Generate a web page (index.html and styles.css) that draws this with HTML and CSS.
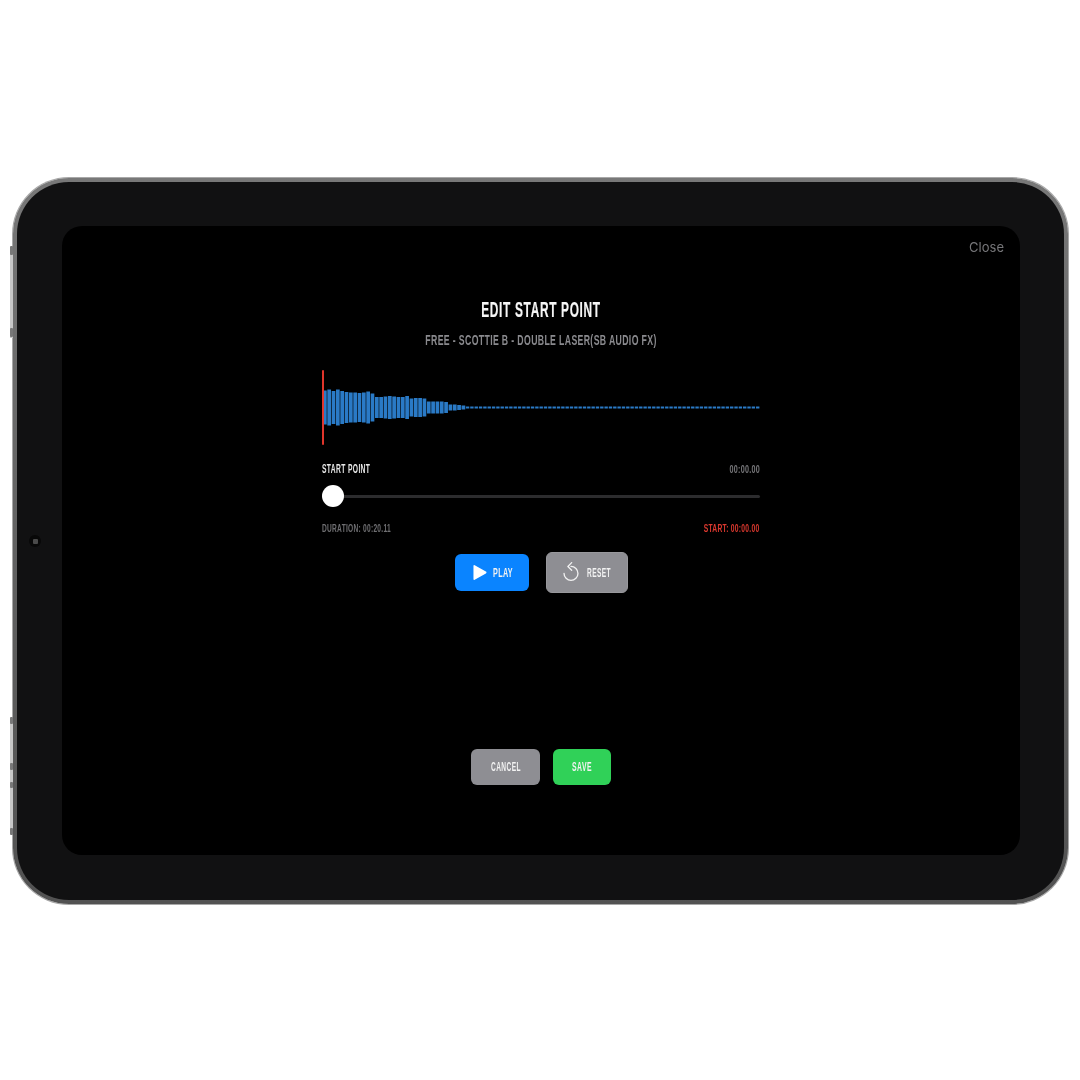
FILE: index.html
```html
<!DOCTYPE html>
<html lang="en">
<head>
<meta charset="utf-8">
<title>Edit Start Point</title>
<link rel="stylesheet" href="styles.css">
</head>
<body>
<div class="stage">
  <div class="device">
    <span class="rail rail-top"></span>
    <span class="rail rail-bottom"></span>
    <span class="key key-1"></span>
    <span class="key key-2"></span>
    <span class="key key-3"></span>
    <span class="key key-4"></span>
    <span class="key key-5"></span>
    <span class="key key-6"></span>
    <span class="camera"><i></i></span>
    <main class="screen">
      <span class="close">Close</span>
      <section class="panel">
        <h1 class="title">EDIT START POINT</h1>
        <p class="subtitle">FREE - SCOTTIE B - DOUBLE LASER(SB AUDIO FX)</p>
        <div class="wave">
          <svg class="wave-svg" viewBox="0 0 438 75" width="438" height="75">
            <g class="wave-bars">
              <rect x="1" y="20.5" width="3.7" height="34"/><rect x="5.33" y="19.5" width="3.7" height="36"/><rect x="9.66" y="21" width="3.7" height="33"/><rect x="13.99" y="19.5" width="3.7" height="36"/><rect x="18.32" y="21" width="3.7" height="33"/><rect x="22.65" y="22" width="3.7" height="31"/><rect x="26.98" y="22.5" width="3.7" height="30"/><rect x="31.31" y="22.5" width="3.7" height="30"/><rect x="35.64" y="23" width="3.7" height="29"/><rect x="39.97" y="22.5" width="3.7" height="30"/><rect x="44.3" y="21.5" width="3.7" height="32"/><rect x="48.63" y="23.5" width="3.7" height="28"/>
              <rect x="52.96" y="27" width="3.7" height="21"/><rect x="57.29" y="27" width="3.7" height="21"/><rect x="61.62" y="26.5" width="3.7" height="22"/><rect x="65.95" y="26" width="3.7" height="23"/><rect x="70.28" y="26.5" width="3.7" height="22"/><rect x="74.61" y="27" width="3.7" height="21"/><rect x="78.94" y="27" width="3.7" height="21"/><rect x="83.27" y="26" width="3.7" height="23"/>
              <rect x="87.6" y="28.5" width="3.7" height="18"/><rect x="91.93" y="28" width="3.7" height="19"/><rect x="96.26" y="28" width="3.7" height="19"/><rect x="100.59" y="28.5" width="3.7" height="18"/><rect x="104.92" y="31.5" width="3.7" height="12"/><rect x="109.25" y="31.5" width="3.7" height="12"/><rect x="113.58" y="31.5" width="3.7" height="12"/><rect x="117.91" y="31.5" width="3.7" height="12"/><rect x="122.24" y="32" width="3.7" height="11"/>
              <rect x="126.57" y="34.5" width="3.7" height="6"/><rect x="130.9" y="34.5" width="3.7" height="6"/><rect x="135.23" y="35" width="3.7" height="5"/><rect x="139.56" y="35.5" width="3.7" height="4"/>
            </g>
            <line class="wave-tail" x1="143.89" y1="37.5" x2="438" y2="37.5"/>
            <rect class="wave-marker" x="0" y="0" width="2" height="75" rx="1"/>
          </svg>
        </div>
        <div class="row row-head">
          <span class="label">START POINT</span>
          <span class="time">00:00.00</span>
        </div>
        <div class="slider"><span class="thumb"></span></div>
        <div class="row row-info">
          <span class="duration">DURATION: 00:20.11</span>
          <span class="start">START: 00:00.00</span>
        </div>
        <div class="controls">
          <button class="btn btn-play">
            <svg class="icon-play" viewBox="0 0 15 18" width="14" height="17"><path d="M1.8 1.2 13.8 8a1.1 1.1 0 0 1 0 2L1.8 16.8A.9.9 0 0 1 .5 16V2a.9.9 0 0 1 1.3-.8Z" fill="#fff"/></svg>
            <span class="btn-label label-play"><span>PLAY</span></span>
          </button>
          <button class="btn btn-reset">
            <svg class="icon-reset" viewBox="2 0.5 17 22" width="16" height="20.7" fill="none" stroke="#f2f2f2" stroke-width="1.4" stroke-linecap="round" stroke-linejoin="round"><path d="M10.5 5.2a7.4 7.4 0 1 1-7.4 7.4"/><path d="M11.2 1.2 7.2 5.2l4 4"/></svg>
            <span class="btn-label label-reset"><span>RESET</span></span>
          </button>
        </div>
      </section>
      <footer class="actions">
        <button class="btn btn-cancel"><span class="btn-label label-cancel"><span>CANCEL</span></span></button>
        <button class="btn btn-save"><span class="btn-label label-save"><span>SAVE</span></span></button>
      </footer>
    </main>
  </div>
</div>
</body>
</html>
```
FILE: styles.css
```css
* { box-sizing: border-box; }
html, body { margin: 0; padding: 0; background: #fff; }
.stage {
  width: 1080px;
  height: 1080px;
  padding: 178px 12px 176px 13px;
  background: #fff;
  display: flex;
}
.device {
  position: relative;
  flex: 1;
  display: flex;
  padding: 44px 44px 45px 45px;
  border: 4px solid transparent;
  border-radius: 56px;
  background:
    linear-gradient(#111112, #111112) padding-box,
    linear-gradient(#787878, #626262 50%, #525252) border-box;
  box-shadow: 0 0 0 1px #a8a8a8;
}
.rail {
  position: absolute;
  left: -7px;
  width: 3px;
  background: #c8c8c8;
}
.rail-top { top: 68px; height: 88px; }
.rail-bottom { top: 538px; height: 112px; }
.key {
  position: absolute;
  left: -7px;
  width: 3px;
  border-radius: 1px;
  background: #787878;
}
.key-1 { top: 64px; height: 9px; }
.key-2 { top: 146px; height: 9px; }
.key-3 { top: 535px; height: 7px; }
.key-4 { top: 581px; height: 7px; }
.key-5 { top: 600px; height: 6px; }
.key-6 { top: 646px; height: 7px; }
.camera {
  position: absolute;
  left: 12px;
  top: 353px;
  width: 12px;
  height: 12px;
  border-radius: 50%;
  background: #080808;
  display: flex;
  align-items: center;
  justify-content: center;
}
.camera i { width: 5px; height: 5px; background: #4a4a4a; border-radius: 1px; }
.screen {
  position: relative;
  flex: 1;
  display: flex;
  flex-direction: column;
  align-items: center;
  background: #000;
  border-radius: 20px;
  padding: 71px 0 70px;
  font-family: "Liberation Sans", sans-serif;
  filter: blur(0.35px);
}
.close {
  position: absolute;
  top: 13px;
  right: 16px;
  font: 13px/17px Inter, sans-serif;
  color: #77777a;
}
.panel { width: 438px; }
.title {
  margin: 0;
  font-size: 22px;
  line-height: 26px;
  font-weight: 700;
  letter-spacing: 1.25px;
  text-align: center;
  white-space: nowrap;
  color: #f6f6f6;
  transform: scaleX(0.54);
  -webkit-text-stroke: 0.2px #f6f6f6;
}
.subtitle {
  margin: 7px 0 0;
  font-size: 15px;
  line-height: 20px;
  font-weight: 700;
  letter-spacing: 0.63px;
  text-align: center;
  white-space: nowrap;
  color: #8a8a8e;
  transform: scaleX(0.58);
}
.wave {
  height: 75px;
  margin-top: 20px;
  display: flex;
}
.wave-svg { display: block; overflow: visible; }
.wave-bars { fill: #2a7ac6; }
.wave-tail {
  stroke: #2a7ac6;
  stroke-width: 2;
  stroke-dasharray: 3.4 0.93;
}
.wave-marker { fill: #e0352b; }
.row {
  display: flex;
  justify-content: space-between;
  line-height: 14px;
  white-space: nowrap;
}
.row-head { margin-top: 17px; }
.label {
  font-size: 12px;
  font-weight: 700;
  letter-spacing: 0.65px;
  color: #e8e8e8;
  transform: scaleX(0.56);
  transform-origin: left center;
}
.time {
  font-size: 11px;
  font-weight: 700;
  letter-spacing: 0.46px;
  color: #77777a;
  transform: scaleX(0.65);
  transform-origin: right center;
}
.slider {
  position: relative;
  height: 22px;
  margin-top: 9px;
  display: flex;
  align-items: center;
}
.slider::before {
  content: "";
  flex: 1;
  height: 3px;
  border-radius: 2px;
  background: #2c2c2e;
}
.thumb {
  position: absolute;
  left: 0;
  top: 0;
  width: 22px;
  height: 22px;
  border-radius: 50%;
  background: #fff;
}
.row-info { margin-top: 14px; font-size: 11px; font-weight: 700; letter-spacing: 0.45px; }
.duration {
  color: #6f6f72;
  transform: scaleX(0.6);
  transform-origin: left center;
}
.start {
  color: #d9382e;
  transform: scaleX(0.61);
  transform-origin: right center;
}
.controls {
  display: flex;
  align-items: center;
  justify-content: center;
  gap: 17px;
  margin-top: 17px;
}
.btn {
  display: flex;
  align-items: center;
  justify-content: center;
  padding: 0;
  border: 0;
  border-radius: 6px;
  color: #f2f2f2;
  font-family: inherit;
  font-size: 12px;
  font-weight: 700;
}
.btn-label {
  display: flex;
  justify-content: center;
  white-space: nowrap;
}
.label-play { width: 20px; letter-spacing: 0.58px; transform: scaleX(0.6); }
.label-reset { width: 24px; letter-spacing: 0.73px; transform: scaleX(0.55); }
.label-cancel { width: 30px; letter-spacing: 0.76px; transform: scaleX(0.55); }
.label-save { width: 20px; letter-spacing: 0.85px; transform: scaleX(0.57); }
.btn-play { width: 74px; height: 37px; gap: 6px; padding-left: 2px; background: #0a84ff; }
.btn-reset { width: 82px; height: 41px; gap: 8px; background: #8e8e93; border: 1px solid #98989c; }
.actions {
  margin-top: auto;
  display: flex;
  gap: 13px;
}
.btn-cancel { width: 69px; height: 36px; background: #8e8e93; }
.btn-save { width: 58px; height: 36px; background: #30d158; }
```
